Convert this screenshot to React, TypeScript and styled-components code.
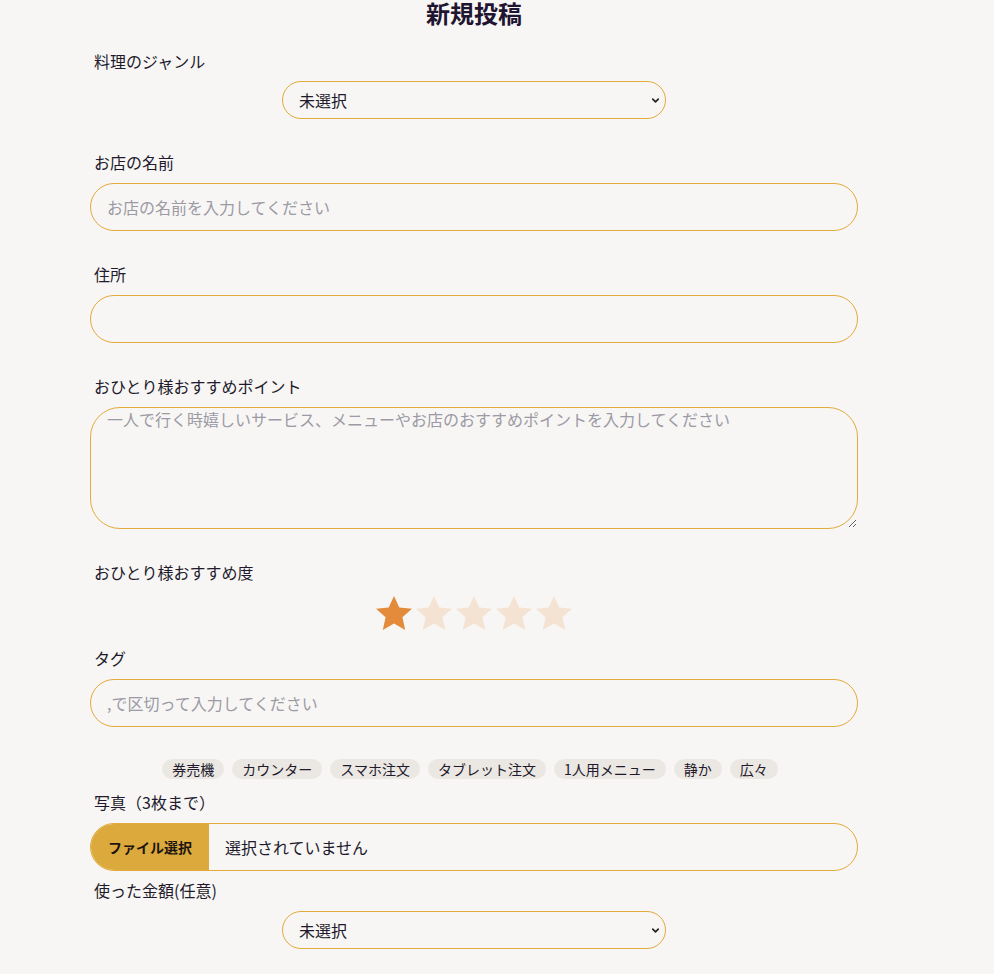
import React, { useState } from 'react'
import styled, { createGlobalStyle } from 'styled-components'
import { ChevronDown } from 'lucide-react'

const GlobalStyle = createGlobalStyle`
  html, body {
    margin: 0;
    padding: 0;
    background: #f7f6f4;
  }
  body {
    font-family: "Noto Sans CJK JP", "Noto Sans", sans-serif;
    color: #221a2c;
  }
  * { box-sizing: border-box; }
`

const Page = styled.div`
  padding-left: 90px;
  width: 858px;
`

const Title = styled.h1`
  margin: 0;
  padding-top: 1px;
  font-size: 24px;
  line-height: 24px;
  font-weight: 700;
  text-align: center;
  color: #1f1530;
`

const Field = styled.div<{ $top: number }>`
  display: flex;
  flex-direction: column;
  margin-top: ${p => p.$top}px;
`

const Label = styled.label<{ $gap?: number }>`
  font-size: 16px;
  line-height: 20px;
  padding-left: 4px;
  margin-bottom: ${p => p.$gap ?? 11}px;
  color: #221a2c;
`

const SelectWrap = styled.div`
  position: relative;
  width: 384px;
  align-self: center;
`

const Select = styled.select`
  appearance: none;
  width: 100%;
  height: 38px;
  border: 1px solid #e3aa3c;
  border-radius: 19px;
  background: transparent;
  padding: 0 16px;
  font-family: inherit;
  font-size: 16px;
  color: #221a2c;
  outline: none;
`

const Chevron = styled(ChevronDown)`
  position: absolute;
  right: 5px;
  top: 14px;
  pointer-events: none;
  color: #222;
`

const TextInput = styled.input`
  width: 100%;
  height: 48px;
  border: 1px solid #e3aa3c;
  border-radius: 24px;
  background: transparent;
  padding: 0 16px 1px;
  font-family: inherit;
  font-size: 16px;
  color: #221a2c;
  outline: none;
  &::placeholder { color: #9b9aa5; }
`

const TextArea = styled.textarea`
  width: 100%;
  height: 122px;
  border: 1px solid #e3aa3c;
  border-radius: 30px;
  background: transparent;
  padding: 0 16px;
  font-family: inherit;
  font-size: 16px;
  line-height: 22px;
  color: #221a2c;
  outline: none;
  &::placeholder { color: #9b9aa5; }
`

const Stars = styled.div`
  display: flex;
  justify-content: center;
  height: 40px;
`

const StarButton = styled.span`
  width: 40px;
  height: 40px;
  cursor: pointer;
  display: block;
`

const Chips = styled.div`
  display: flex;
  justify-content: center;
  gap: 8px;
  margin-top: 32px;
  padding-right: 8px;
`

const Chip = styled.span`
  background: #ebe7e3;
  border-radius: 10px;
  height: 20px;
  padding: 0 10px;
  font-size: 14px;
  line-height: 20px;
  color: #221a2c;
`

const FileBox = styled.label`
  display: flex;
  align-items: center;
  height: 48px;
  border: 1px solid #e3aa3c;
  border-radius: 24px;
  overflow: hidden;
  cursor: pointer;
  input { display: none; }
`

const FileButton = styled.span`
  display: flex;
  align-items: center;
  justify-content: center;
  width: 118px;
  height: 100%;
  background: #dcaa3c;
  font-size: 14px;
  font-weight: 700;
  color: #1b1410;
`

const FileText = styled.span`
  padding-left: 16px;
  padding-bottom: 1px;
  font-size: 16px;
  color: #221a2c;
`

const Star = ({ on }: { on: boolean }) => (
  <svg width="40" height="40" viewBox="0 0 40 40">
    <polygon
      points="20,2 25.3,13.6 38,14.8 28.4,23.3 31.2,36 20,29.5 8.8,36 11.6,23.3 2,14.8 14.7,13.6"
      fill={on ? '#e38b3a' : '#f4e3d3'}
    />
  </svg>
)

const tags = ['券売機', 'カウンター', 'スマホ注文', 'タブレット注文', '1人用メニュー', '静か', '広々']

export default function App() {
  const [rating, setRating] = useState(1)

  return (
    <Page>
      <GlobalStyle />
      <Title>新規投稿</Title>

      <Field $top={26}>
        <Label $gap={10}>料理のジャンル</Label>
        <SelectWrap>
          <Select defaultValue="">
            <option value="">未選択</option>
          </Select>
          <Chevron size={11} strokeWidth={3.5} />
        </SelectWrap>
      </Field>

      <Field $top={33}>
        <Label>お店の名前</Label>
        <TextInput placeholder="お店の名前を入力してください" />
      </Field>

      <Field $top={33}>
        <Label>住所</Label>
        <TextInput />
      </Field>

      <Field $top={33}>
        <Label>おひとり様おすすめポイント</Label>
        <TextArea placeholder="一人で行く時嬉しいサービス、メニューやお店のおすすめポイントを入力してください" />
      </Field>

      <Field $top={33}>
        <Label $gap={12}>おひとり様おすすめ度</Label>
        <Stars>
          {[1, 2, 3, 4, 5].map(n => (
            <StarButton key={n} onClick={() => setRating(n)}>
              <Star on={n <= rating} />
            </StarButton>
          ))}
        </Stars>
      </Field>

      <Field $top={14}>
        <Label>タグ</Label>
        <TextInput placeholder=",で区切って入力してください" />
        <Chips>
          {tags.map(t => <Chip key={t}>{t}</Chip>)}
        </Chips>
      </Field>

      <Field $top={13}>
        <Label>写真（3枚まで）</Label>
        <FileBox>
          <input type="file" multiple />
          <FileButton>ファイル選択</FileButton>
          <FileText>選択されていません</FileText>
        </FileBox>
      </Field>

      <Field $top={9}>
        <Label>使った金額(任意)</Label>
        <SelectWrap>
          <Select defaultValue="">
            <option value="">未選択</option>
          </Select>
          <Chevron size={11} strokeWidth={3.5} />
        </SelectWrap>
      </Field>
    </Page>
  )
}
